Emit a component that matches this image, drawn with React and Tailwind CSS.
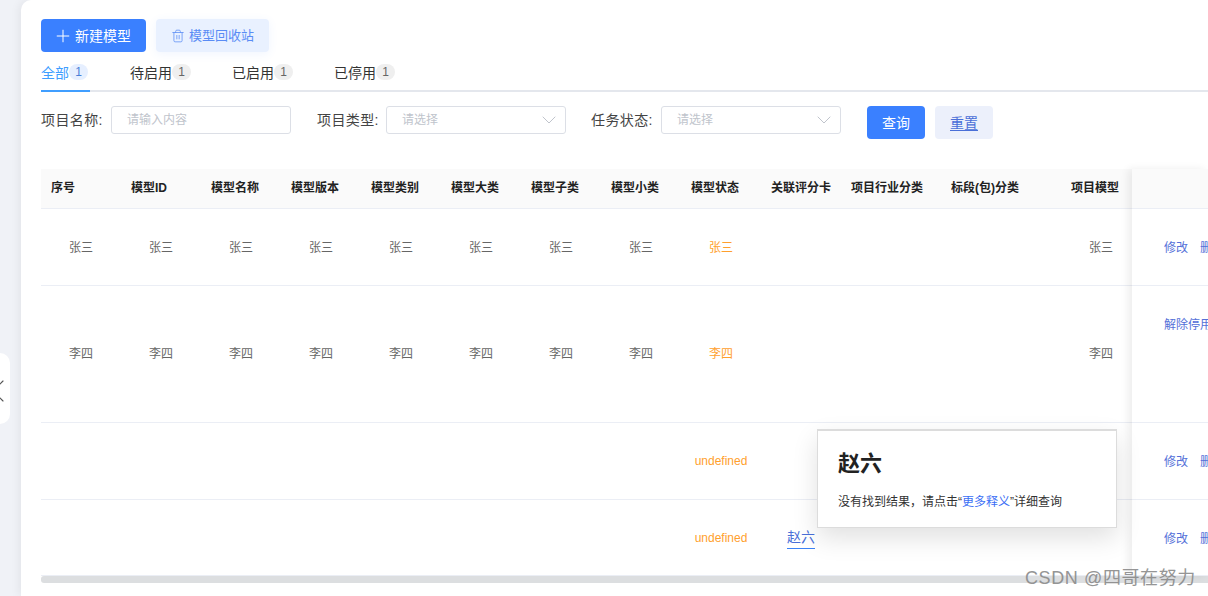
import React from 'react';
import { Plus, Trash2, ChevronDown, ChevronLeft } from 'lucide-react';

const headers = ['序号', '模型ID', '模型名称', '模型版本', '模型类别', '模型大类', '模型子类', '模型小类', '模型状态', '关联评分卡', '项目行业分类', '标段(包)分类', '项目模型'];
const tabs = [
  { label: '全部', active: true },
  { label: '待启用' },
  { label: '已启用' },
  { label: '已停用' },
];

const gridCols = 'grid grid-cols-[repeat(10,80px)_100px_120px_80px] w-[1100px]';

const Select = () => (
  <div className="flex h-7 w-[180px] items-center justify-between rounded-[3px] border border-[#dcdfe6] pl-[15px] pr-[4px] text-xs text-[#c0c4cc]">
    <span>请选择</span>
    <ChevronDown className="h-6 w-6 text-[#c0c4cc]" strokeWidth={1} />
  </div>
);

const Row = ({ name, height, pad }) => {
  const cells = Array(8).fill(name);
  return (
    <div className={`${gridCols} ${height} ${pad} items-center border-b border-[#ebeef5] text-center text-xs text-[#666]`}>
      {cells.map((c, i) => (
        <div key={i}>{c}</div>
      ))}
      <div className="text-[#ff9f2e]">{name}</div>
      <div />
      <div />
      <div />
      <div>{name}</div>
    </div>
  );
};

const EmptyRow = ({ height, link }) => (
  <div className={`${gridCols} ${height} items-center border-b border-[#ebeef5] text-center text-xs`}>
    <div className="col-start-9 text-[#ff9f2e]">undefined</div>
    <div>
      {link && <span className="mt-1 inline-block border-b border-[#3b82f6] pb-1 text-sm leading-none text-[#4a6fd8]">{link}</span>}
    </div>
  </div>
);

const Actions = ({ height, pad, children }) => (
  <div className={`flex ${height} ${pad} gap-3 whitespace-nowrap border-b border-[#ebeef5] pl-8 text-xs text-[#5470d8]`}>
    {children}
  </div>
);

export default function App() {
  return (
    <div
      className="relative flex h-[596px] w-[1208px] overflow-hidden bg-[#f0f2f7] text-[#333]"
      style={{ fontFamily: '"Liberation Sans", "Noto Sans CJK SC", sans-serif' }}
    >
      <div className="w-[21px] flex-none" />

      <div className="min-w-0 flex-1 rounded-tl-[10px] bg-white pl-5 pt-[19px] shadow-[-3px_0_8px_rgba(0,0,0,0.05)]">
        <div className="flex gap-[10px]">
          <button className="flex h-[33px] w-[105px] items-center gap-[2px] rounded bg-[#3a80ff] pl-3 text-sm text-white">
            <Plus className="h-5 w-5" strokeWidth={1.2} />
            新建模型
          </button>
          <button className="flex h-[33px] w-[113px] items-center gap-1 rounded bg-[#e9f1ff] pl-[15px] text-[13px] text-[#5a8cf5] shadow-[0_2px_10px_rgba(58,128,255,0.08)]">
            <Trash2 className="h-[14px] w-[14px]" strokeWidth={1.3} />
            模型回收站
          </button>
        </div>

        <div className="flex h-[40px] items-end gap-10 border-b-2 border-[#e4e7ed]">
          {tabs.map((t) => (
            <div
              key={t.label}
              className={`-mb-[2px] flex h-[28px] items-start border-b-2 text-sm ${t.active ? 'border-[#409eff] pr-[2px] text-[#409eff]' : 'border-transparent pr-px text-[#333]'}`}
            >
              <span className="leading-[18px]">{t.label}</span>
              <span className={`flex h-4 w-[19px] items-center justify-center rounded-full text-xs ${t.active ? 'bg-[#e6efff] text-[#4a7fd8]' : 'bg-[#efefef] text-[#666]'}`}>
                1
              </span>
            </div>
          ))}
        </div>

        <div className="mt-[14px] flex items-start">
          <div className="flex h-7 w-[70px] items-center text-sm tracking-[0.4px] text-[#444]">项目名称:</div>
          <div className="flex h-7 w-[180px] items-center rounded-[3px] border border-[#dcdfe6] pl-[15px] text-xs text-[#c0c4cc]">请输入内容</div>
          <div className="ml-[26px] flex h-7 w-[69px] items-center text-sm tracking-[0.4px] text-[#444]">项目类型:</div>
          <Select />
          <div className="ml-[25px] flex h-7 w-[70px] items-center text-sm tracking-[0.4px] text-[#444]">任务状态:</div>
          <Select />
          <button className="ml-[26px] h-[33px] w-[58px] rounded bg-[#3a80ff] text-sm text-white">查询</button>
          <button className="ml-[10px] h-[33px] w-[58px] rounded bg-[#ecf0fb] text-sm text-[#4a6fd8] underline underline-offset-2">重置</button>
        </div>

        <div className="mt-[30px] flex">
          <div className="w-[1091px] flex-none overflow-hidden">
            <div className={`${gridCols} h-10 items-center border-b border-[#ebeef5] bg-[#fafafa] pb-[2px] text-xs font-semibold text-[#222]`}>
              {headers.map((h) => (
                <div key={h} className="whitespace-nowrap pl-[10px]">{h}</div>
              ))}
            </div>
            <Row name="张三" height="h-[77px]" pad="pt-px" />
            <Row name="李四" height="h-[137px]" pad="" />
            <EmptyRow height="h-[77px]" />
            <EmptyRow height="h-[76px]" link="赵六" />
          </div>
          <div className="w-[76px] flex-none overflow-hidden bg-white shadow-[-4px_0_8px_rgba(0,0,0,0.07)]">
            <div className="h-10 border-b border-[#ebeef5] bg-[#fafafa]" />
            <Actions height="h-[77px]" pad="items-center pt-px"><span>修改</span><span>删除</span></Actions>
            <Actions height="h-[137px]" pad="items-start pt-[31px]"><span>解除停用</span></Actions>
            <Actions height="h-[77px]" pad="items-center pt-px"><span>修改</span><span>删除</span></Actions>
            <Actions height="h-[76px]" pad="items-center pt-[3px]"><span>修改</span><span>删除</span></Actions>
          </div>
        </div>

        <div className="h-[7px] rounded-l-[3px] bg-[#dcdee0]" />
      </div>

      {/* collapse handle */}
      <div className="absolute left-0 top-[353px] flex h-[71px] w-[10px] items-center overflow-hidden rounded-r-xl bg-white">
        <ChevronLeft className="mt-[5px] -ml-[22px] h-10 w-10 flex-none text-[#555]" strokeWidth={0.7} />
      </div>

      {/* word lookup popup */}
      <div className="absolute left-[817px] top-[429px] h-[99px] w-[300px] border border-t-2 border-[#dcdcdc] bg-white pl-5 pt-[19px] shadow-[0_10px_24px_rgba(0,0,0,0.12)]">
        <div className="text-[22px] font-bold leading-[28px] text-[#222]">赵六</div>
        <div className="mt-[15px] text-xs leading-[18px] text-[#333]">
          没有找到结果，请点击“<span className="text-[#3b6ff5]">更多释义</span>”详细查询
        </div>
      </div>

      {/* watermark */}
      <div className="absolute left-[1025px] top-[565px] text-lg leading-[26px] tracking-[0.6px] text-[#8a8a8a] opacity-90">CSDN @四哥在努力</div>
    </div>
  );
}
